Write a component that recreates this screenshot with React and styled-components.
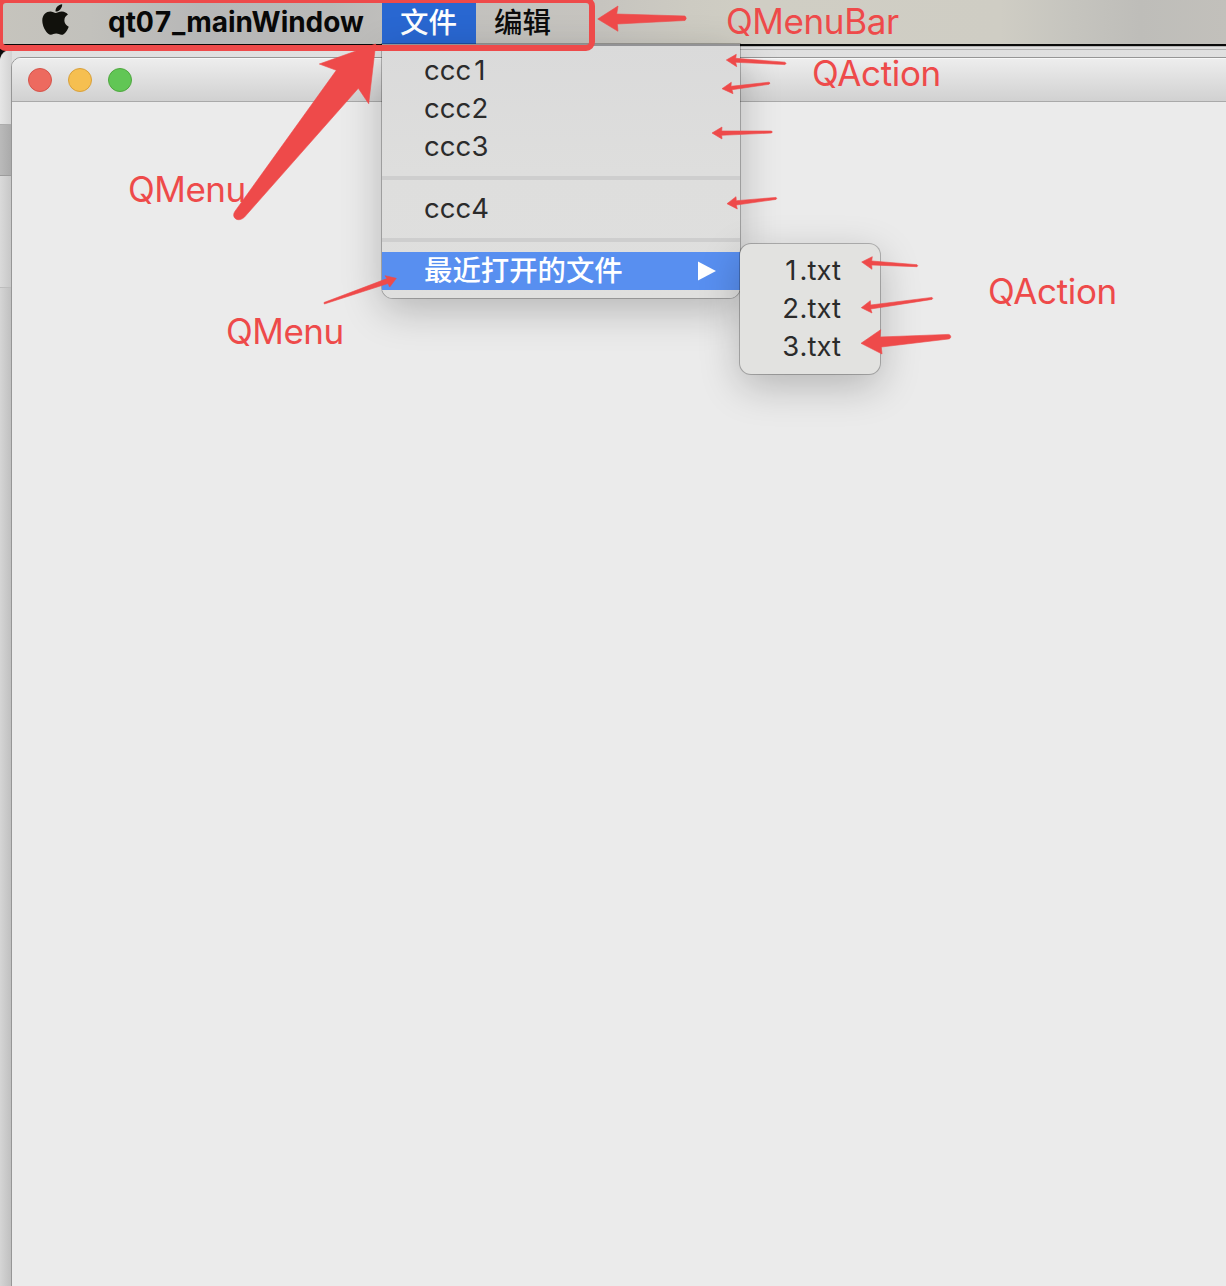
import React from 'react';
import styled, { createGlobalStyle } from 'styled-components';
import { FaApple } from 'react-icons/fa';

const RED = '#ee4a4a';

const GlobalStyle = createGlobalStyle`
  * { box-sizing: border-box; }
  body {
    margin: 0;
    overflow: hidden;
    font-family: Inter, 'Noto Sans CJK SC', sans-serif;
    -webkit-font-smoothing: antialiased;
  }
`;

const Desktop = styled.main`
  position: relative;
  width: 1226px;
  height: 1286px;
  overflow: hidden;
  background: #0a0a0a;
`;

const MenuBar = styled.nav`
  display: flex;
  align-items: stretch;
  height: 44px;
  padding-left: 40px;
  background: linear-gradient(90deg, #c6c4bd 0, #c2c1bc 90px, #b7b7b7 200px, #b9b9b8 330px, #c1c0bd 400px, #c6c4bf 600px, #cdcbc2 690px, #d0cec4 760px, #cfcdc4 1000px, #c5c4be 1075px, #bebdb9 1140px, #c2c0bb 1226px);
`;

const AppleMark = styled.div`
  display: flex;
  width: 68px;
  padding: 2px 0 0 1.5px;
  color: #11110c;
`;

const AppName = styled.div`
  width: 274px;
  line-height: 44px;
  font-size: 28px;
  font-weight: 700;
  font-variant-numeric: tabular-nums;
  letter-spacing: ${(p) => p.$track}px;
  white-space: nowrap;
  color: #080808;
`;

const BarItem = styled.div`
  padding: 0 18px;
  line-height: 42px;
  font-family: 'Noto Sans CJK SC', sans-serif;
  font-size: 28.5px;
  font-weight: 500;
  width: 94px;
  white-space: nowrap;
  color: ${(p) => (p.$active ? '#fff' : '#0c0c0c')};
  background: ${(p) => (p.$active ? '#2967d1' : 'transparent')};
`;

const BackWindow = styled.section`
  position: absolute;
  left: ${(p) => p.$left}px;
  top: ${(p) => p.$top}px;
  width: 1226px;
  height: 1240px;
  border-top: 1px solid #b5b5b5;
  border-radius: 12px 0 0 0;
  background: linear-gradient(#e0e0e0, #dcdcdc 80px);
`;

const BackSidebar = styled.div`
  display: flex;
  flex-direction: column;
  width: 12px;
  height: 100%;
`;

const SidebarBlock = styled.div`
  height: ${(p) => p.$h}px;
  flex: ${(p) => (p.$h ? 'none' : 1)};
  border-bottom: 1px solid ${(p) => p.$line};
  border-radius: ${(p) => (p.$first ? '12px 0 0 0' : 0)};
  background: linear-gradient(90deg, ${(p) => p.$from}, ${(p) => p.$to});
`;

const MainWindow = styled.section`
  position: absolute;
  left: 11px;
  top: 57px;
  width: 1230px;
  height: 1240px;
  border: 1px solid #969696;
  border-radius: 10px 0 0 0;
  background: #ebebeb;
  overflow: hidden;
`;

const TitleBar = styled.header`
  display: flex;
  align-items: center;
  gap: 16px;
  height: 44px;
  padding: 0 16px;
  border-top: 1px solid #f8f8f8;
  border-bottom: 1px solid #a9a9a9;
  background: linear-gradient(#ededed, #d1d1d1);
`;

const Light = styled.span`
  width: 24px;
  height: 24px;
  border-radius: 50%;
  border: 1px solid ${(p) => p.$edge};
  background: ${(p) => p.$fill};
`;

const Popup = styled.div`
  position: absolute;
  left: ${(p) => p.$x}px;
  top: ${(p) => p.$y}px;
  width: ${(p) => p.$w}px;
  padding: 8px 0;
  display: flex;
  flex-direction: column;
  border-radius: ${(p) => (p.$attached ? '0 0 11px 11px' : '11px')};
  background: ${(p) => (p.$attached ? 'linear-gradient(#dadada, #dededd 130px, #dfdfde)' : '#e2e2e0')};
  box-shadow: 0 0 0 1px rgba(0, 0, 0, 0.24), 0 12px 40px rgba(0, 0, 0, 0.23);
`;

const MenuRow = styled.div`
  display: flex;
  align-items: center;
  justify-content: ${(p) => (p.$active ? 'space-between' : 'flex-start')};
  height: 38px;
  line-height: 37px;
  padding: 0 24px 1px 42px;
  font-size: 27.5px;
  white-space: nowrap;
  color: ${(p) => (p.$active ? '#fff' : '#2b2b2b')};
  background: ${(p) => (p.$active ? '#588ff0' : 'transparent')};
`;

const Digit = styled.span`
  width: 17.5px;
  text-align: center;
`;

const CjkLabel = styled.span`
  height: 37px;
  line-height: 34px;
  font-family: 'Noto Sans CJK SC', sans-serif;
  font-size: 28.4px;
  font-weight: 500;
`;

const Separator = styled.div`
  height: 4px;
  margin: 10px 0;
  background: #cecece;
`;

const MenuBarEdge = styled.div`
  position: absolute;
  left: 382px;
  top: 44px;
  width: 358px;
  height: 2px;
  background: #929295;
`;

const Highlight = styled.div`
  position: absolute;
  left: -3px;
  top: -3px;
  width: 598px;
  height: 54px;
  border: 6px solid ${RED};
  border-radius: 9px;
`;

const Arrows = styled.svg`
  position: absolute;
  left: 0;
  top: 0;
  fill: ${RED};
  stroke: ${RED};
  stroke-width: 0.6;
  stroke-linejoin: round;
`;

const Note = styled.span`
  position: absolute;
  left: ${(p) => p.$x}px;
  top: ${(p) => p.$y}px;
  line-height: 44px;
  font-size: 35px;
  letter-spacing: ${(p) => p.$track}px;
  white-space: nowrap;
  color: ${RED};
`;

const arrowPaths = [
  'M597.7 19L618 6L616.7 14L685 16Q687.5 18.3 685 20.5L617.3 24L618 31.3Z',
  'M375.7 44L319.3 64L336.3 70.3L234.7 211.7C231 217.5 238 223 244.3 217.3L358.3 88.3L368.7 103.7Z',
  'M396.3 278.3L385 275.7L387 278.6L324 302.5L324.3 304L388 283.5L389.7 287Z',
  'M726.3 60L736.3 54.3L735.7 58.3L785 62.2Q787 63.5 785 64.6L735.7 62.3L736.7 66.7Z',
  'M722 88.7L731.3 82.3L731 86.3L769 82.2Q771 83 769 84.3L732 89.7L733 93.7Z',
  'M712 133L722 127L721.7 131L771.5 131Q773 132 771.5 133L721.7 135.3L722 139Z',
  'M727 203.7L736 196.7L736.3 200.7L776 197.4Q777.5 198.2 776 199.4L736.3 205L737.3 209Z',
  'M861.7 262L872.3 256.7L871.7 261L917 264.7Q918.5 265.7 917 266.7L871.7 265L872 269.3Z',
  'M861.3 307.7L870.3 300.7L870.7 305L932 297.4Q933.5 298.2 932 299.4L870.7 309L872 313Z',
  'M861 343.3L880.7 329.7L880 337L948.5 334.4C951.5 335 951.5 338.5 948.5 339L881.3 347L882 354Z',
];

const notes = [
  { text: 'QMenuBar', x: 726, y: -1, track: -0.4 },
  { text: 'QAction', x: 812, y: 51, track: -0.35 },
  { text: 'QMenu', x: 128, y: 167, track: -0.5 },
  { text: 'QMenu', x: 226, y: 309, track: -0.5 },
  { text: 'QAction', x: 988, y: 269, track: -0.35 },
];

const lights = [
  ['#ed6a5f', '#d5544b'],
  ['#f6bf50', '#d8a03c'],
  ['#61c655', '#4fa73f'],
];

export default function App() {
  return (
    <Desktop>
      <GlobalStyle />
      <MenuBar>
        <AppleMark><FaApple size={35} style={{ width: 27 }} preserveAspectRatio="none" /></AppleMark>
        <AppName $track={-0.02}>qt07_mainWindow</AppName>
        <BarItem $active>文件</BarItem>
        <BarItem>编辑</BarItem>
      </MenuBar>

      <BackWindow $left={20} $top={46} />
      <BackWindow $left={0} $top={49}>
        <BackSidebar>
          <SidebarBlock $first $h={75} $from="#e6e6e6" $to="#d2d2d2" $line="#adadad" />
          <SidebarBlock $h={51} $from="#bababa" $to="#a9a9a9" $line="#9c9c9c" />
          <SidebarBlock $h={112} $from="#dadada" $to="#c6c6c6" $line="#bdbdbd" />
          <SidebarBlock $from="#d5d5d5" $to="#bebebe" $line="#bdbdbd" />
        </BackSidebar>
      </BackWindow>

      <MainWindow>
        <TitleBar>
          {lights.map(([fill, edge]) => <Light key={fill} $fill={fill} $edge={edge} />)}
        </TitleBar>
      </MainWindow>

      <Popup $attached $x={382} $y={44} $w={358}>
        <MenuRow>ccc<Digit>1</Digit></MenuRow>
        <MenuRow>ccc<Digit>2</Digit></MenuRow>
        <MenuRow>ccc<Digit>3</Digit></MenuRow>
        <Separator />
        <MenuRow>ccc<Digit>4</Digit></MenuRow>
        <Separator />
        <MenuRow $active>
          <CjkLabel>最近打开的文件</CjkLabel>
          <svg width="18" height="20" viewBox="0 0 18 20" fill="#fff"><path d="M0 .5L18 10L0 19.5Z" /></svg>
        </MenuRow>
      </Popup>
      <MenuBarEdge />
      <Popup $x={740} $y={244} $w={140}>
        <MenuRow><Digit>1</Digit>.txt</MenuRow>
        <MenuRow><Digit>2</Digit>.txt</MenuRow>
        <MenuRow><Digit>3</Digit>.txt</MenuRow>
      </Popup>

      <Highlight />
      <Arrows width="1226" height="400" viewBox="0 0 1226 400">
        {arrowPaths.map((d) => <path key={d} d={d} />)}
      </Arrows>
      {notes.map((n) => (
        <Note key={`${n.x}`} $x={n.x} $y={n.y} $track={n.track}>{n.text}</Note>
      ))}
    </Desktop>
  );
}
